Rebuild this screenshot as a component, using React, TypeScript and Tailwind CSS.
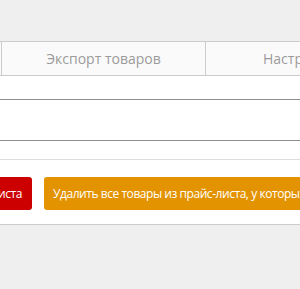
export default function App() {
  return (
    <div className="w-[300px] h-[289px] overflow-hidden bg-[#efefef]" style={{ fontFamily: '"Open Sans", sans-serif' }}>
      <div className="h-[41px]" />
      <div className="bg-white border-y border-[#cccccc]">
        <div className="flex h-[34px] bg-[#fafafa] border-b border-[#cccccc] ml-[-202px] w-max">
          <div className="w-[204px] border-r border-[#cccccc]" />
          <div className="w-[204px] border-r border-[#cccccc] flex items-center justify-center text-[14px] text-[#9a9a9a]">
            Экспорт товаров
          </div>
          <div className="w-[204px] flex items-center pl-[57px] text-[14px] text-[#9a9a9a] whitespace-nowrap">
            Настройки
          </div>
        </div>
        <div className="h-[23px]" />
        <div className="h-[42px] border-y border-[#8f8f8f]" />
        <div className="h-[19px] border-b border-[#dddddd]" />
        <div className="flex items-center gap-[12px] pt-[17px] pb-[14px] ml-[-120px] w-max">
          <button className="h-[33px] w-[152px] rounded-[3px] bg-[#cc0000] text-white text-[12px] tracking-[-0.45px] flex items-center justify-end pr-[10px] whitespace-nowrap">
            Удалить прайс-листа
          </button>
          <button className="h-[33px] rounded-[3px] bg-[#e39300] text-white text-[12px] tracking-[-0.45px] px-[9px] flex items-center whitespace-nowrap">
            Удалить все товары из прайс-листа, у которых нет остатка
          </button>
        </div>
      </div>
    </div>
  );
}
